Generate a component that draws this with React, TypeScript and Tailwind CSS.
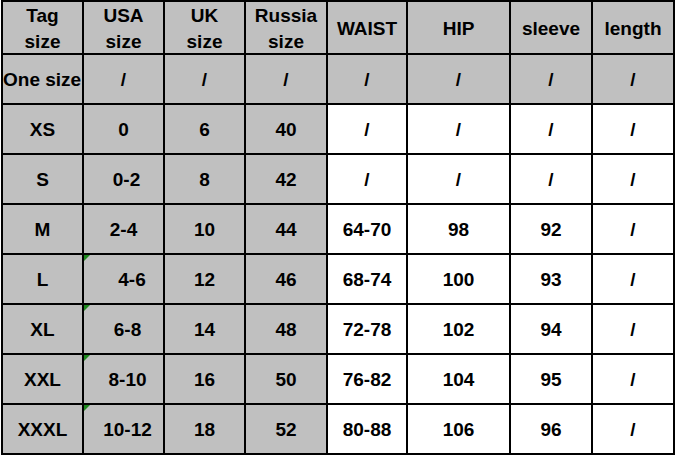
const widths = ["w-[79px]", "w-[79px]", "w-[79px]", "w-[80px]", "w-[78px]", "w-[101px]", "w-[80px]", "w-[80px]"]

const header = [["Tag", "size"], ["USA", "size"], ["UK", "size"], ["Russia", "size"], ["WAIST"], ["HIP"], ["sleeve"], ["length"]]

// [tag, usa, uk, russia, waist, hip, sleeve, length], usa padding nudge, green mark
const rows: { cells: string[]; nudge?: string; mark?: boolean; allGrey?: boolean }[] = [
  { cells: ["One size", "/", "/", "/", "/", "/", "/", "/"], allGrey: true },
  { cells: ["XS", "0", "6", "40", "/", "/", "/", "/"] },
  { cells: ["S", "0-2", "8", "42", "/", "/", "/", "/"], nudge: "pl-[6px]" },
  { cells: ["M", "2-4", "10", "44", "64-70", "98", "92", "/"] },
  { cells: ["L", "4-6", "12", "46", "68-74", "100", "93", "/"], nudge: "pl-[17px]", mark: true },
  { cells: ["XL", "6-8", "14", "48", "72-78", "102", "94", "/"], nudge: "pl-[8px]", mark: true },
  { cells: ["XXL", "8-10", "16", "50", "76-82", "104", "95", "/"], nudge: "pl-[8px]", mark: true },
  { cells: ["XXXL", "10-12", "18", "52", "80-88", "106", "96", "/"], nudge: "pl-[8px]", mark: true },
]

function GreenMark() {
  return (
    <svg className="absolute left-0 top-0" width="6" height="6" viewBox="0 0 6 6">
      <polygon points="0,0 6,0 0,6" fill="#1f8a1f" />
    </svg>
  )
}

export default function App() {
  return (
    <div className="w-[675px] h-[457px] bg-white pl-[1px] font-['Liberation_Sans',Arial,sans-serif] font-bold text-[19px] text-black">
      <div className="inline-flex flex-col gap-[2px] bg-black p-[2px]">
        {/* header row */}
        <div className="flex gap-[2px] h-[51px]">
          {header.map((lines, i) => (
            <div key={i} className={`${widths[i]} bg-[#c0c0c0] flex flex-col items-center justify-center pt-[2px] leading-[26px]`}>
              {lines.map((l) => (
                <span key={l}>{l}</span>
              ))}
            </div>
          ))}
        </div>

        {rows.map((row, r) => (
          <div key={r} className="flex gap-[2px] h-[48px]">
            {row.cells.map((c, i) => {
              const grey = row.allGrey || i < 4
              const isOneSize = r === 0 && i === 0
              return (
                <div
                  key={i}
                  className={`${widths[i]} relative flex items-center ${isOneSize ? "justify-start whitespace-nowrap overflow-hidden" : "justify-center"} ${grey ? "bg-[#c0c0c0]" : "bg-white"} ${i === 1 && row.nudge ? row.nudge : ""}`}
                >
                  {i === 1 && row.mark && <GreenMark />}
                  <span className="pt-[3px]">{c}</span>
                </div>
              )
            })}
          </div>
        ))}
      </div>
    </div>
  )
}
